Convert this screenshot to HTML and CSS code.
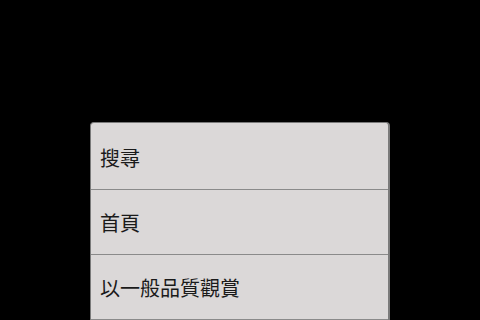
FILE: index.html
```html
<!DOCTYPE html>
<html lang="zh-Hant">
<head>
<meta charset="utf-8">
<link rel="stylesheet" href="styles.css">
</head>
<body>
<div class="screen">
  <div class="menu">
    <div class="item">搜尋</div>
    <div class="item">首頁</div>
    <div class="item">以一般品質觀賞</div>
  </div>
</div>
</body>
</html>
```
FILE: styles.css
```css
html, body {
  margin: 0;
  padding: 0;
  background: #000;
}
.screen {
  width: 480px;
  height: 320px;
  overflow: hidden;
  display: flex;
  flex-direction: column;
  padding: 122px 0 0 90px;
  box-sizing: border-box;
}
.menu {
  width: 300px;
  box-sizing: border-box;
  background: #dbd8d8;
  border: 1px solid #7a7a7a;
  border-right-width: 2px;
  border-bottom: none;
  border-radius: 4px 4px 0 0;
  padding-top: 2px;
  display: flex;
  flex-direction: column;
}
.item {
  height: 65px;
  box-sizing: border-box;
  border-bottom: 1px solid #8a8a8a;
  display: flex;
  align-items: center;
  padding-left: 9px;
  font-family: "Noto Sans CJK TC", "Noto Sans CJK SC", sans-serif;
  font-size: 20px;
  color: #1a1a1a;
  flex-shrink: 0;
}
```
